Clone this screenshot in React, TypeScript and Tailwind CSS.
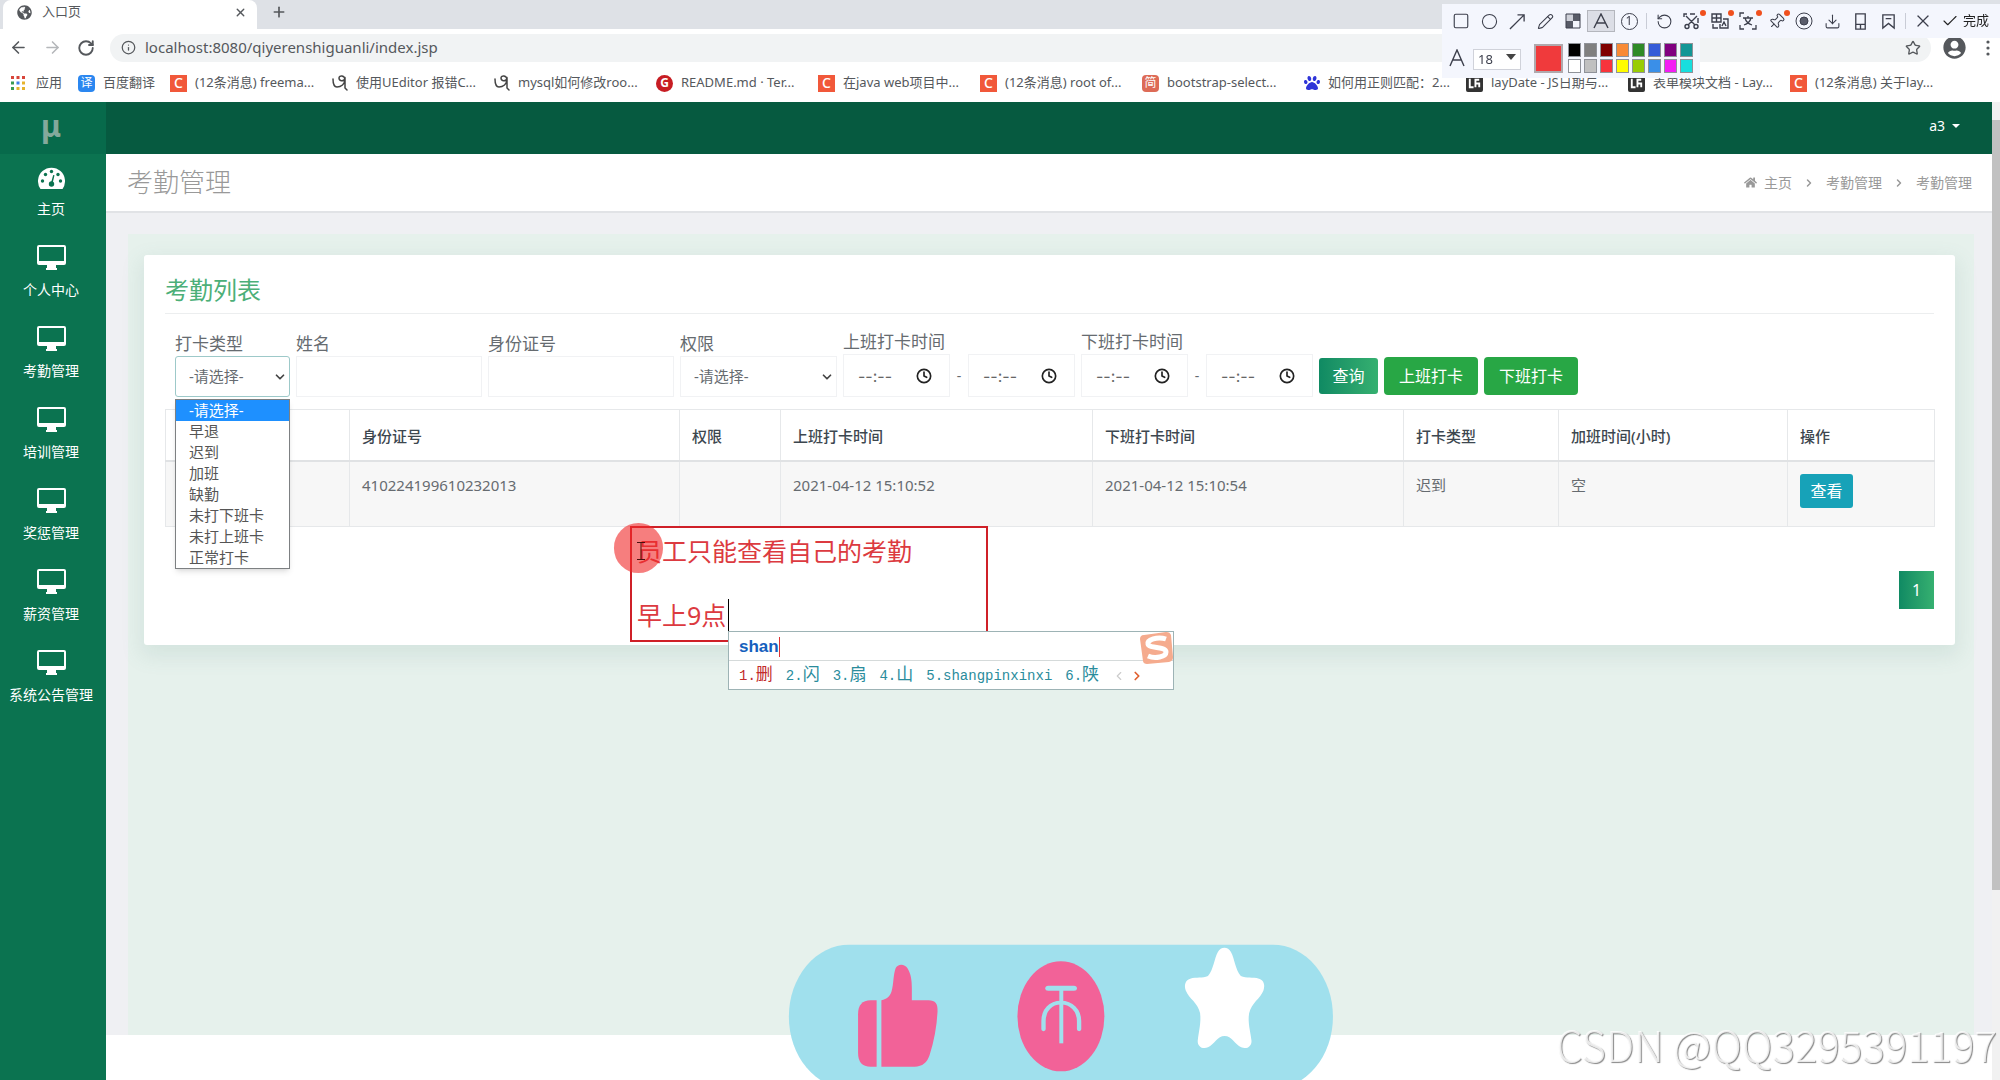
import React from 'react';
import {
    ArrowLeft, ArrowRight, ArrowUpRight, Bookmark, Check, ChevronDown, ChevronLeft, ChevronRight, Circle, Clock,
    Download, Info, Pencil, Pin, Plus, RotateCcw, RotateCw, Scissors, Square, Star, X,
} from 'lucide-react';
import { FaHome, FaPaw, FaUserCircle, FaGlobeAmericas } from 'react-icons/fa';

interface BookmarkItem {
    icon: React.ReactNode;
    title: string;
}

interface AttendanceRow {
    idCard: string;
    role: string;
    startTime: string;
    endTime: string;
    type: string;
    overtime: string;
}

const csdnIcon = <span className="flex h-[17px] w-[17px] items-center justify-center bg-[#f1583a] text-sm font-medium text-white">C</span>;

const swirlIcon = (
    <svg viewBox="0 0 16 16" className="h-4 w-4" fill="none" stroke="#444" strokeWidth="1.5" strokeLinecap="round">
        <path d="M1 4c0 4 1 8 4 8 4 0 8-3 8-7 0-5-6-5-6-2s4 4 6 1v9l2 2" />
    </svg>
);

const layuiIcon = (
    <svg viewBox="0 0 18 18" className="h-[17px] w-[17px]">
        <rect width="18" height="18" rx="2" fill="#333" />
        <path d="M4 4v9h4M10 13V5h4M14 8v5M10 9h4" fill="none" stroke="#fff" strokeWidth="2" />
    </svg>
);

const bookmarks: BookmarkItem[] = [
    { icon: csdnIcon, title: "(12条消息) freema..." },
    { icon: swirlIcon, title: "使用UEditor 报错C..." },
    { icon: swirlIcon, title: "mysql如何修改roo..." },
    {
        icon: <span className="flex h-[17px] w-[17px] items-center justify-center rounded-full bg-[#c71d23] text-xs font-bold text-white">G</span>,
        title: "README.md · Ter..."
    },
    { icon: csdnIcon, title: "在java web项目中..." },
    { icon: csdnIcon, title: "(12条消息) root of..." },
    {
        icon: <span className="flex h-[17px] w-[17px] items-center justify-center rounded-sm bg-[#dd6b57] text-xs text-white">简</span>,
        title: "bootstrap-select..."
    },
    { icon: <FaPaw size={16} color="#2f35d8" />, title: "如何用正则匹配：2..." },
    { icon: layuiIcon, title: "layDate - JS日期与..." },
    { icon: layuiIcon, title: "表单模块文档 - Lay..." },
    { icon: csdnIcon, title: "(12条消息) 关于lay..." },
];

const menus = ["个人中心", "考勤管理", "培训管理", "奖惩管理", "薪资管理", "系统公告管理"];

const clockTypes = ["-请选择-", "早退", "迟到", "加班", "缺勤", "未打下班卡", "未打上班卡", "正常打卡"];

const rows: AttendanceRow[] = [
    {
        idCard: "410224199610232013",
        role: "",
        startTime: "2021-04-12 15:10:52",
        endTime: "2021-04-12 15:10:54",
        type: "迟到",
        overtime: "空"
    }
];

const swatches = [
    "bg-black", "bg-[#808080]", "bg-[#800000]", "bg-[#f88a36]", "bg-[#2f8a27]", "bg-[#355bd8]", "bg-[#800080]", "bg-[#139696]",
    "bg-white", "bg-[#c0c0c0]", "bg-[#f8343c]", "bg-[#fffc00]", "bg-[#99cc05]", "bg-[#3a8fe8]", "bg-[#f31cf3]", "bg-[#17dede]",
];

const candidates = ["删", "闪", "扇", "山", "shangpinxinxi", "陕"];

const BrowserBar: React.FC = () => (
    <div className="h-[102px] shrink-0 overflow-hidden bg-white text-[#55585c]">
        {/* Tab strip */}
        <div className="flex h-[29px] items-start bg-[#dee1e6] pl-[3px]">
            <div className="flex h-[29px] w-[254px] items-center rounded-t-lg bg-white pb-[5px] pl-[14px] pr-[10px] text-[13px]">
                <FaGlobeAmericas size={15} color="#55585c" />
                <span className="ml-[10px] flex-1">入口页</span>
                <button aria-label="关闭标签页"><X size={13} strokeWidth={2.5} /></button>
            </div>
            <button className="ml-[14px] mt-[4px]" aria-label="新标签页"><Plus size={16} strokeWidth={2.5} /></button>
        </div>

        {/* Address bar */}
        <div className="flex h-[37px] items-center pl-[9px] pr-1">
            <button className="w-[34px]" aria-label="后退"><ArrowLeft size={19} /></button>
            <button className="w-[34px] text-[#b5b7ba]" aria-label="前进"><ArrowRight size={19} /></button>
            <button className="w-[33px]" aria-label="刷新"><RotateCw size={18} strokeWidth={2.5} /></button>
            <div className="flex h-[28px] flex-1 items-center rounded-full bg-[#f1f3f4] pl-[11px] pr-[10px]">
                <Info size={15} />
                <input
                    aria-label="地址"
                    className="ml-[9px] min-w-0 flex-1 bg-transparent text-[15px] text-[#55585c] outline-none"
                    defaultValue="localhost:8080/qiyerenshiguanli/index.jsp"
                />
                <Star size={16} />
            </div>
            <FaUserCircle size={23} className="ml-[12px]" />
            <svg viewBox="0 0 4 16" className="ml-[20px] mr-[6px] h-4 w-1" fill="#55585c">
                <circle cx="2" cy="2" r="1.6" /><circle cx="2" cy="8" r="1.6" /><circle cx="2" cy="14" r="1.6" />
            </svg>
        </div>

        {/* Bookmarks */}
        <div className="flex h-[34px] items-center whitespace-nowrap pl-[10px] text-[13px]">
            <a href="#" className="flex w-[68px] items-center gap-[10px]">
                <svg viewBox="0 0 16 16" className="h-4 w-4">
                    <path d="M1 1h3v3H1zM6.500 1h3v3h-3zM12 1h3v3h-3z" fill="#d8453a" />
                    <path d="M1 6.500h3v3H1z" fill="#3b9a51" /><path d="M6.500 6.500h3v3h-3z" fill="#3f7fe8" /><path d="M12 6.500h3v3h-3z" fill="#e6b32c" />
                    <path d="M1 12h3v3H1z" fill="#3b9a51" /><path d="M6.500 12h3v3h-3zM12 12h3v3h-3z" fill="#e6b32c" />
                </svg>
                应用
            </a>
            <a href="#" className="flex w-[92px] items-center gap-2">
                <span className="flex h-[17px] w-[17px] items-center justify-center rounded-sm bg-[#2b87f0] text-xs text-white">译</span>
                百度翻译
            </a>
            {bookmarks.map((item) => (
                <a href="#" key={item.title} className="flex w-[162px] shrink-0 items-center gap-2">
                    {item.icon}
                    {item.title}
                </a>
            ))}
        </div>
    </div>
);

const ToolButton: React.FC<{ label: string; active?: boolean; dot?: boolean; children: React.ReactNode }> = ({ label, active, dot, children }) => (
    <button
        aria-label={label}
        className={`relative flex h-[22px] w-[28px] items-center justify-center ${active ? 'border border-[#b4b6bd] bg-[#dcdee6]' : ''}`}
    >
        {children}
        {dot && <span className="absolute right-0 top-0 h-[6px] w-[6px] rounded-full bg-[#f0501e]"></span>}
    </button>
);

// Capture toolbar floating over the top right corner
const CaptureToolbar: React.FC = () => (
    <div className="fixed right-0 top-1 w-[558px] text-[#3c3f4c]">
        <div className="flex h-[34px] items-center bg-[#f4f6fd] pl-[5px]">
            <ToolButton label="矩形"><Square size={18} strokeWidth={1.500} /></ToolButton>
            <ToolButton label="椭圆"><Circle size={17} strokeWidth={1.500} /></ToolButton>
            <ToolButton label="箭头">
                <svg viewBox="0 0 18 18" className="h-[17px] w-[17px]" fill="none" stroke="currentColor" strokeWidth="1.4"><path d="M1 17 16 2M9 2h7v7" /></svg>
            </ToolButton>
            <ToolButton label="画笔"><Pencil size={17} strokeWidth={1.500} /></ToolButton>
            <ToolButton label="马赛克">
                <svg viewBox="0 0 16 16" className="h-4 w-4" stroke="currentColor" fill="none">
                    <path d="M1 1h14v14H1z" />
                    <path d="M8 1h7v7H8zM1 8h7v7H1z" fill="currentColor" fillOpacity=".85" stroke="none" />
                    <path d="M1 1h7v7H1z" fill="currentColor" fillOpacity=".2" stroke="none" />
                </svg>
            </ToolButton>
            <ToolButton label="文字" active>
                <svg viewBox="0 0 16 16" className="h-4 w-4" stroke="currentColor" fill="none" strokeWidth="1.4"><path d="M1 15 8 1l7 14M4 10h8" /></svg>
            </ToolButton>
            <ToolButton label="序号"><span className="flex h-[17px] w-[17px] items-center justify-center rounded-full border border-current text-xs">1</span></ToolButton>
            <span className="mx-[3px] h-4 w-px bg-[#c9ccd6]"></span>
            <ToolButton label="撤销"><RotateCcw size={17} strokeWidth={1.500} /></ToolButton>
            <ToolButton label="长截图" dot>
                <svg viewBox="0 0 18 18" className="h-[18px] w-[18px]" fill="none" stroke="currentColor" strokeWidth="1.4">
                    <path d="M1 5V2h3M7 2h5M15 6v5M3 4l9 9M14 4l-9 9" /><circle cx="4" cy="14.500" r="2" /><circle cx="13" cy="14.500" r="2" />
                </svg>
            </ToolButton>
            <ToolButton label="翻译" dot>
                <svg viewBox="0 0 18 18" className="h-[18px] w-[18px]" fill="none" stroke="currentColor" strokeWidth="1.4">
                    <path d="M1 2h9v8H1zM1 6h9M5.500 2v8M12 7h5v9H9v-4M11 14l2-4 2 4M2 12v4h5" />
                </svg>
            </ToolButton>
            <ToolButton label="识别文字" dot>
                <svg viewBox="0 0 18 18" className="h-[18px] w-[18px]" fill="none" stroke="currentColor" strokeWidth="1.3">
                    <path d="M1 5V1h4M17 13v4h-4M1 13v4h4M4 6h10M9 4v2M6 6c1 4 4 6 7 7M12 6c-1 4-4 6-7 7" />
                </svg>
            </ToolButton>
            <ToolButton label="钉住" dot><Pin size={17} strokeWidth={1.500} className="rotate-45" /></ToolButton>
            <ToolButton label="录制">
                <svg viewBox="0 0 18 18" className="h-[18px] w-[18px]" fill="none" stroke="currentColor"><circle cx="9" cy="9" r="8" /><circle cx="9" cy="9" r="4" fill="#5a5d6b" /></svg>
            </ToolButton>
            <ToolButton label="保存"><Download size={17} strokeWidth={1.500} /></ToolButton>
            <ToolButton label="发送到手机">
                <svg viewBox="0 0 18 18" className="h-[17px] w-[17px]" fill="none" stroke="currentColor" strokeWidth="1.4"><path d="M4 1h10v16H4zM4 12h10M9 12v5" /></svg>
            </ToolButton>
            <ToolButton label="收藏">
                <svg viewBox="0 0 18 18" className="h-[17px] w-[17px]" fill="none" stroke="currentColor" strokeWidth="1.4"><path d="M3 2h12v14l-6-5-6 5zM6 6h6" /></svg>
            </ToolButton>
            <span className="mx-[3px] h-4 w-px bg-[#c9ccd6]"></span>
            <ToolButton label="取消"><X size={20} strokeWidth={1.500} /></ToolButton>
            <button className="flex items-center gap-1 whitespace-nowrap pl-1 text-[13px] text-[#222]"><Check size={18} strokeWidth={1.500} />完成</button>
        </div>
        <div className="flex h-[40px] w-[258px] items-center bg-[#f4f6fd] pl-[7px]">
            <svg viewBox="0 0 16 18" className="h-[18px] w-4" stroke="currentColor" fill="none" strokeWidth="1.4"><path d="M1 17 8 1l7 16M4 11h8" /></svg>
            <div className="relative ml-2">
                <select aria-label="字号" className="h-[21px] w-[48px] appearance-none border border-[#d0d2da] bg-white pl-1 text-[13px]">
                    <option>18</option>
                </select>
                <svg viewBox="0 0 10 6" className="pointer-events-none absolute right-[5px] top-2 h-[6px] w-[10px]"><path d="M0 0h10L5 6z" fill="#444" /></svg>
            </div>
            <button aria-label="当前颜色" className="ml-[13px] h-[29px] w-[29px] border-2 border-[#b0a9ad] bg-[#f03a3c]"></button>
            <div className="ml-[5px] grid grid-cols-8 gap-x-[3px] gap-y-[2px]">
                {swatches.map((color) => (
                    <button key={color} aria-label="颜色" className={`h-[14px] w-[13px] border border-[#8f9299] ${color}`}></button>
                ))}
            </div>
        </div>
    </div>
);

const Sidebar: React.FC = () => (
    <nav className="w-[106px] shrink-0 bg-[#0b7350] text-sm text-white">
        <div className="flex h-[52px] items-center justify-center bg-[#076a4b] pb-1 pr-1 text-[30px] font-bold text-[#84a99c]">μ</div>
        <a href="#" className="block pb-4 pr-1 pt-[10px] text-center">
            <span className="flex h-[25px] items-end justify-center">
                <svg viewBox="0 0 27 22" className="h-[22px] w-[27px]">
                    <path d="M2.500 22A13.500 13.500 0 1 1 24.500 22z" fill="#fff" />
                    <g fill="#0b7350">
                        <circle cx="4.500" cy="14" r="1.700" /><circle cx="7.500" cy="7.500" r="1.700" /><circle cx="13.500" cy="4.500" r="1.700" />
                        <circle cx="20" cy="7.500" r="1.700" /><circle cx="22.500" cy="14" r="1.700" /><circle cx="13.500" cy="17" r="2.700" />
                        <path d="m15.200 8 1.300.3-2 8.500-1.700-.4z" />
                    </g>
                </svg>
            </span>
            <span className="mt-[10px] block leading-5">主页</span>
        </a>
        {menus.map((menu) => (
            <a href="#" key={menu} className="block whitespace-nowrap pb-4 pr-1 pt-[10px] text-center">
                <svg viewBox="0 0 29 25" className="mx-auto h-[25px] w-[29px]">
                    <path d="M2 0h25a2 2 0 0 1 2 2v16a2 2 0 0 1-2 2h-8v3h1v2H9v-2h1v-3H2a2 2 0 0 1-2-2V2a2 2 0 0 1 2-2zM2 2v14h25V2z" fill="#fff" fillRule="evenodd" />
                </svg>
                <span className="mt-[10px] block leading-5">{menu}</span>
            </a>
        ))}
    </nav>
);

const TimeField: React.FC<{ id?: string; label: string }> = ({ id, label }) => (
    <div className="relative">
        <input
            id={id}
            aria-label={label}
            placeholder="--:--"
            className="h-[43px] w-[107px] border border-[#f1f2f4] pl-[14px] font-['Inter',sans-serif] text-base placeholder:text-[#666]"
        />
        <Clock size={16} strokeWidth={2.5} className="pointer-events-none absolute right-[18px] top-[14px] text-[#222]" />
    </div>
);

const TimeRange: React.FC<{ id: string; label: string }> = ({ id, label }) => (
    <div>
        <label htmlFor={id} className="block text-[17px] leading-6">{label}</label>
        <div className="flex items-center">
            <TimeField id={id} label={label} />
            <span className="w-[18px] text-center text-sm">-</span>
            <TimeField label={`${label}止`} />
        </div>
    </div>
);

const FilterForm: React.FC = () => (
    <form className="mt-4 flex items-end gap-[6px] pl-[10px] text-[#666b70]">
        <div className="relative">
            <label htmlFor="clockType" className="block text-[17px] leading-6">打卡类型</label>
            <select id="clockType" className="block h-[41px] w-[115px] appearance-none rounded-[3px] border border-[#9dc9c9] bg-white pl-[13px] text-[15px]">
                {clockTypes.map((type) => <option key={type}>{type}</option>)}
            </select>
            <ChevronDown size={14} strokeWidth={3} className="pointer-events-none absolute bottom-[13px] right-[3px] text-[#444]" />
            {/* Opened option list */}
            <ul role="listbox" className="absolute left-0 top-[67px] z-10 w-[115px] border border-[#7d8082] bg-white text-[15px] text-[#555] shadow-md">
                {clockTypes.map((type, index) => (
                    <li
                        key={type}
                        role="option"
                        aria-selected={index === 0}
                        className={`h-[21px] pl-[13px] leading-[21px] ${index === 0 ? 'bg-[#1e90ff] text-white' : ''}`}
                    >
                        {type}
                    </li>
                ))}
            </ul>
        </div>
        <div>
            <label htmlFor="name" className="block text-[17px] leading-6">姓名</label>
            <input id="name" className="block h-[41px] w-[186px] border border-[#f1f2f4]" />
        </div>
        <div>
            <label htmlFor="idCard" className="block text-[17px] leading-6">身份证号</label>
            <input id="idCard" className="block h-[41px] w-[186px] border border-[#f1f2f4]" />
        </div>
        <div className="relative">
            <label htmlFor="role" className="block text-[17px] leading-6">权限</label>
            <select id="role" className="block h-[41px] w-[157px] appearance-none border border-[#f1f2f4] bg-white pl-[13px] text-[15px]">
                <option>-请选择-</option>
            </select>
            <ChevronDown size={14} strokeWidth={3} className="pointer-events-none absolute bottom-[13px] right-[3px] text-[#444]" />
        </div>
        <TimeRange id="startTime" label="上班打卡时间" />
        <TimeRange id="endTime" label="下班打卡时间" />
        <div className="flex h-[43px] items-center gap-[6px] whitespace-nowrap text-base text-white">
            <button type="button" className="h-[36px] w-[59px] rounded-[3px] bg-linear-to-r from-[#0f8a63] to-[#35b070]">查询</button>
            <button type="button" className="h-[38px] w-[94px] rounded bg-[#28a745]">上班打卡</button>
            <button type="button" className="h-[38px] w-[94px] rounded bg-[#28a745]">下班打卡</button>
        </div>
    </form>
);

const AttendanceTable: React.FC = () => (
    <table className="mt-3 w-full table-fixed border-collapse border border-[#e6e8ea] text-left text-[15px] text-[#666b70]">
        <colgroup>
            <col className="w-[184px]" />
            <col className="w-[330px]" />
            <col className="w-[101px]" />
            <col className="w-[312px]" />
            <col className="w-[311px]" />
            <col className="w-[155px]" />
            <col className="w-[229px]" />
            <col className="w-[147px]" />
        </colgroup>
        <thead className="text-[#3d474f]">
            <tr className="h-[51px] border-b-2 border-[#e0e2e4]">
                {["", "身份证号", "权限", "上班打卡时间", "下班打卡时间", "打卡类型", "加班时间(小时)", "操作"].map((head) => (
                    <th key={head} className="border-x border-[#e6e8ea] px-3 pt-[3px] font-medium">{head}</th>
                ))}
            </tr>
        </thead>
        <tbody>
            {rows.map((row) => (
                <tr key={row.idCard} className="h-[66px] bg-[#f7f7f7] align-top *:border-x *:border-[#e6e8ea] *:px-3 *:pt-3">
                    <td></td>
                    <td>{row.idCard}</td>
                    <td>{row.role}</td>
                    <td>{row.startTime}</td>
                    <td>{row.endTime}</td>
                    <td>{row.type}</td>
                    <td>{row.overtime}</td>
                    <td><button className="h-[34px] w-[53px] rounded-[3px] bg-[#17a2b8] text-base text-white">查看</button></td>
                </tr>
            ))}
        </tbody>
    </table>
);

// Text note being typed on the screen, with the input method window under it
const Annotation: React.FC = () => (
    <div className="absolute left-[630px] top-[526px]">
        <textarea
            aria-label="批注"
            spellCheck={false}
            className="block h-[116px] w-[358px] resize-none overflow-hidden border-2 border-[#cf2028] bg-transparent px-[5px] pt-[7px] text-[25px] leading-8 text-[#dc3a40] outline-none"
            defaultValue={"员工只能查看自己的考勤\n\n早上9点"}
        />
        <span className="absolute left-[98px] top-[73px] h-[32px] w-px bg-black"></span>
        <span className="absolute -left-4 -top-[3px] h-[50px] w-[49px] rounded-full bg-[#f02828]/60"></span>
        <svg viewBox="0 0 8 18" className="absolute left-[7px] top-4 h-[18px] w-2" fill="none" stroke="#4a1010"><path d="M0 .5h8M4 .5v17M0 17.500h8" /></svg>

        <div className="absolute left-[98px] top-[105px] w-[446px] border border-[#9db3b5] bg-white">
            <div className="flex h-[29px] items-center border-b border-[#d5dada] pl-[10px] pt-px font-['Liberation_Sans',sans-serif] text-[17px] font-bold text-[#1560bd]">
                shan<span className="h-5 w-px bg-[#d33]"></span>
            </div>
            <div className="flex h-[28px] items-center gap-[13px] whitespace-nowrap pl-[10px] pt-[2px] font-['Liberation_Mono','Noto_Sans_CJK_SC',monospace] text-sm text-[#2a8c9c]">
                {candidates.map((word, index) => (
                    <span key={word} className={index === 0 ? 'text-[#c22b2b]' : ''}>
                        {index + 1}.<span className={word.length > 1 ? '' : 'text-[17px]'}>{word}</span>
                    </span>
                ))}
                <span className="flex gap-1">
                    <ChevronLeft size={14} className="text-[#ccc]" />
                    <ChevronRight size={14} strokeWidth={3} className="text-[#e0602f]" />
                </span>
            </div>
            <svg viewBox="0 0 34 34" className="absolute -top-px right-0 h-[34px] w-[34px]">
                <path d="M5 4 27 1c3 0 4 1 5 3l2 22c0 3-1 4-4 5L8 33c-2 0-4-1-4-3L1 8c0-2 1-4 4-4z" fill="#f5ab8e" />
                <path d="M27 8C18 5 8 9 9 13c1 5 18 2 18 8 0 5-11 7-18 4" fill="none" stroke="#fff" strokeWidth="5" />
            </svg>
        </div>
    </div>
);

// Like, coin and favourite badge
const TripleBadge: React.FC = () => (
    <svg viewBox="0 0 1568 480" preserveAspectRatio="none" className="fixed bottom-0 left-[38%] h-[160px] w-[620px]">
        <rect x="73" y="74" width="1376" height="432" rx="152" ry="216" fill="#a0e0ed" />
        <g fill="#f26298">
            <path d="M295 241h-15c-22 0-32 15-32 42v115c0 27 10 42 32 42h15z" />
            <path d="M307 241c14-4 22-12 26-28 5-20 4-50 10-68 5-14 23-14 30 0 9 18 11 36 11 60v36h42c18 0 24 10 23 34-2 45-9 90-20 130-6 22-18 35-38 35h-84z" />
            <ellipse cx="761" cy="289" rx="110" ry="165" />
        </g>
        <g fill="none" stroke="#a0e0ed" strokeLinecap="round">
            <path d="M729 205h65" strokeWidth="15" />
            <path d="M762 205v165" strokeWidth="10" strokeLinecap="butt" />
            <path d="M717 328v-24c0-34 18-56 44-56s46 22 46 56v24" strokeWidth="11" />
        </g>
        <path
            d="M1158 96c7-17 26-17 33 0 10 22 10 50 25 72 14 8 30 2 46 8 13 5 16 20 11 36-8 24-30 36-36 68-4 28 3 52 6 82 1 17-12 27-26 20-16-9-24-34-42-34s-26 25-42 34c-14 7-27-3-26-20 3-30 9-54 6-82-5-32-28-44-36-68-5-16-2-31 11-36 16-6 31 0 45-8 15-22 15-50 25-72z"
            fill="#fff"
        />
    </svg>
);

const App: React.FC = () => {
    return (
        <div className="relative flex h-screen flex-col overflow-hidden bg-white font-['Noto_Sans','Noto_Sans_CJK_SC',sans-serif]">
            <BrowserBar />

            <div className="flex min-h-0 flex-1">
                <Sidebar />

                <main className="flex min-w-0 flex-1 flex-col">
                    <header className="flex h-[52px] shrink-0 items-center justify-end bg-[#065a40] pb-[5px] pr-[32px]">
                        <button className="flex items-center gap-[7px] text-sm text-white">
                            a3
                            <svg viewBox="0 0 8 4" className="h-1 w-2"><path d="M0 0h8L4 4z" fill="#fff" /></svg>
                        </button>
                    </header>

                    <div className="flex h-[59px] shrink-0 items-center justify-between border-b-2 border-[#e1e3e6] pl-[21px] pr-[20px] text-[#999]">
                        <h1 className="text-[26px] font-light">考勤管理</h1>
                        <nav className="flex items-center text-sm">
                            <a href="#" className="flex items-center gap-[7px]"><FaHome size={13} />主页</a>
                            <ChevronRight size={12} strokeWidth={3} className="mx-[11px]" />
                            <a href="#">考勤管理</a>
                            <ChevronRight size={12} strokeWidth={3} className="mx-[11px]" />
                            <span>考勤管理</span>
                        </nav>
                    </div>

                    <div className="mb-[45px] flex min-h-0 flex-1 flex-col bg-[#eff0f3] pl-[22px] pr-[18px] pt-[21px]">
                        <div className="flex-1 bg-[#e6f1ec] pl-4 pr-[19px] pt-[21px]">
                            <section className="rounded-[3px] bg-white px-[21px] pb-[36px] pt-[17px] shadow-[0_8px_20px_4px_rgba(90,140,130,0.12)]">
                                <h2 className="border-b border-[#eceeef] pb-[5px] text-2xl leading-9 text-[#4caf78]">考勤列表</h2>
                                <FilterForm />
                                <AttendanceTable />
                                <div className="mt-[44px] flex justify-end">
                                    <button className="h-[38px] w-[35px] bg-linear-to-r from-[#0f8a63] to-[#35b070] text-base text-white">1</button>
                                </div>
                            </section>
                        </div>
                    </div>
                </main>

                {/* Scrollbar */}
                <div className="w-2 shrink-0 bg-[#f1f1f1] pt-[18px]">
                    <div className="h-[770px] bg-[#c1c1c1]"></div>
                </div>
            </div>

            <Annotation />
            <CaptureToolbar />
            <TripleBadge />
            <div className="fixed bottom-[6px] right-[3px] whitespace-nowrap font-['Noto_Sans_CJK_SC',sans-serif] text-[42px] font-light leading-[60px] text-white/80 [text-shadow:1px_1px_1px_#888]">
                CSDN @QQ3295391197
            </div>
        </div>
    );
};

export default App;
